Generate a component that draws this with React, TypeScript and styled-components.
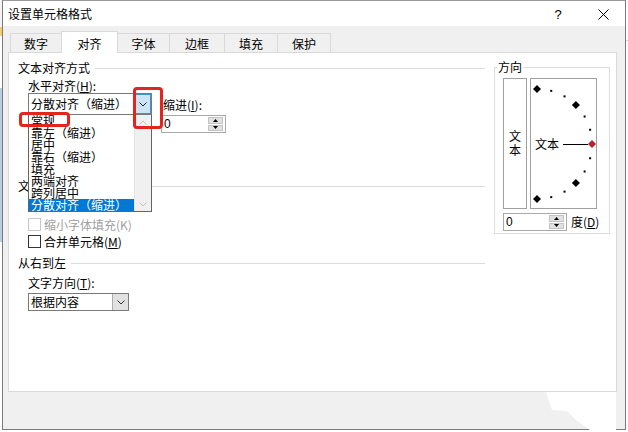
import styled, { createGlobalStyle } from 'styled-components';

const GlobalStyle = createGlobalStyle`
  html, body {
    margin: 0;
    padding: 0;
    background: #ffffff;
  }
  body {
    font-family: "Noto Sans CJK SC", "Noto Sans", sans-serif;
    font-size: 12px;
    color: #000;
  }
`;

const tabs = [
  { label: '数字', w: 52 },
  { label: '对齐', w: 57, active: true },
  { label: '字体', w: 53 },
  { label: '边框', w: 56 },
  { label: '填充', w: 54 },
  { label: '保护', w: 54 },
];

const alignOptions = ['常规', '靠左（缩进）', '居中', '靠右（缩进）', '填充', '两端对齐', '跨列居中', '分散对齐（缩进）'];

function Chevron({ color = '#333', up = false }: { color?: string; up?: boolean }) {
  return (
    <svg width="8" height="5" viewBox="0 0 8 5">
      <polyline
        points={up ? '0.5,4.5 4,1 7.5,4.5' : '0.5,0.5 4,4 7.5,0.5'}
        fill="none"
        stroke={color}
        strokeWidth="1"
      />
    </svg>
  );
}

function Spin({ width }: { width: number }) {
  return (
    <SpinBox style={{ width }}>
      <SpinValue>0</SpinValue>
      <SpinButtons>
        <SpinHalf>
          <svg width="5" height="3" viewBox="0 0 5 3">
            <polygon points="0,3 2.5,0 5,3" fill="#000" />
          </svg>
        </SpinHalf>
        <SpinHalf>
          <svg width="5" height="3" viewBox="0 0 5 3">
            <polygon points="0,0 2.5,3 5,0" fill="#000" />
          </svg>
        </SpinHalf>
      </SpinButtons>
    </SpinBox>
  );
}

function Dial() {
  const cx = 6;
  const cy = 65;
  const r = 55;
  const marks = [];
  for (let k = 0; k <= 12; k++) {
    const a = ((90 - 15 * k) * Math.PI) / 180;
    const x = cx + r * Math.cos(a);
    const y = cy - r * Math.sin(a);
    if (k === 6) continue;
    if (k % 3 === 0) {
      marks.push(<polygon key={k} points={`${x},${y - 4} ${x + 4},${y} ${x},${y + 4} ${x - 4},${y}`} fill="#000" />);
    } else {
      marks.push(<rect key={k} x={x - 1} y={y - 1} width="2" height="2" fill="#000" />);
    }
  }
  return (
    <svg width="65" height="129" viewBox="0 0 65 129">
      {marks}
      <text x="4" y="70" fontSize="12" fontFamily='"Noto Sans CJK SC", sans-serif' fill="#000">
        文本
      </text>
      <line x1="32" y1="65.5" x2="57" y2="65.5" stroke="#000" strokeWidth="1" />
      <polygon points="61,61 65,65 61,69 57,65" fill="#b8202a" />
    </svg>
  );
}

export default function App() {
  return (
    <>
      <GlobalStyle />
      <Page>
        <Edge $bg="linear-gradient(to bottom, #f4f4f4 0 27px, #f2cf74 27px 36px, #ffffff 36px 88px, #b9cde4 88px 242px, #ffffff 242px)" />
        <Dialog>
          <TitleBar>
            <Title>设置单元格格式</Title>
            <HelpButton>?</HelpButton>
            <CloseButton>
              <svg width="11" height="11" viewBox="0 0 11 11">
                <line x1="0.5" y1="0.5" x2="10.5" y2="10.5" stroke="#000" strokeWidth="1" />
                <line x1="10.5" y1="0.5" x2="0.5" y2="10.5" stroke="#000" strokeWidth="1" />
              </svg>
            </CloseButton>
          </TitleBar>

          <Body>
            <TabRow>
              {tabs.map((t) => (
                <Tab key={t.label} $w={t.w} $active={!!t.active}>
                  {t.label}
                </Tab>
              ))}
            </TabRow>

            <Panel>
              <LeftCol>
                <GroupHeader>文本对齐方式</GroupHeader>
                <AlignRow>
                  <ComboCol>
                    <FieldLabel>
                      水平对齐(<u>H</u>):
                    </FieldLabel>
                    <Combo $w={124} $h={22} $mt={-1}>
                      <ComboText>分散对齐（缩进）</ComboText>
                      <ComboButton $open>
                        <Chevron color="#222" />
                      </ComboButton>
                    </Combo>
                    <DropList>
                      <ListItems>
                        {alignOptions.map((o, i) => (
                          <ListItem key={o} $sel={i === alignOptions.length - 1}>
                            {o}
                          </ListItem>
                        ))}
                      </ListItems>
                      <ScrollBar>
                        <Chevron color="#c2c2c2" up />
                        <Chevron color="#c2c2c2" />
                      </ScrollBar>
                    </DropList>
                  </ComboCol>
                  <IndentCol>
                    <FieldLabel $pl={2}>
                      缩进(<u>I</u>):
                    </FieldLabel>
                    <SpinWrap $mt={2}>
                      <Spin width={65} />
                    </SpinWrap>
                  </IndentCol>
                </AlignRow>

                <GroupHeader $mt={45}>文本控制</GroupHeader>
                <CheckList>
                  <CheckRow $disabled>
                    <CheckBox $disabled />
                    缩小字体填充(K)
                  </CheckRow>
                  <CheckRow>
                    <CheckBox />
                    合并单元格(<u>M</u>)
                  </CheckRow>
                </CheckList>

                <GroupHeader $mt={5}>从右到左</GroupHeader>
                <Indent>
                  <FieldLabel $mt={4}>
                    文字方向(<u>T</u>):
                  </FieldLabel>
                  <Combo $w={101} $h={18} $mt={2}>
                    <ComboText>根据内容</ComboText>
                    <ComboButton>
                      <Chevron color="#333" />
                    </ComboButton>
                  </Combo>
                </Indent>
              </LeftCol>

              <DirectionGroup>
                <Legend>方向</Legend>
                <DialRow>
                  <VerticalBox>
                    <span>文</span>
                    <span>本</span>
                  </VerticalBox>
                  <DialBox>
                    <Dial />
                  </DialBox>
                </DialRow>
                <DegreeRow>
                  <Spin width={64} />
                  <DegreeLabel>
                    度(<u>D</u>)
                  </DegreeLabel>
                </DegreeRow>
              </DirectionGroup>

              <Mark style={{ left: 124, top: 34, width: 30, height: 42 }} />
              <Mark style={{ left: 10, top: 59, width: 51, height: 15 }} />
            </Panel>
          </Body>
          <Smudge />
        </Dialog>
        <Edge $bg="linear-gradient(to bottom, #ffffff 0 40px, #d4d4d4 40px 41px, #ffffff 41px)" />
      </Page>
    </>
  );
}

const Page = styled.div`
  display: flex;
  width: 628px;
  height: 432px;
  overflow: hidden;
  background: #ffffff;
`;

const Edge = styled.div<{ $bg: string }>`
  width: 2px;
  height: 432px;
  flex-shrink: 0;
  background: ${(p) => p.$bg};
`;

const Dialog = styled.div`
  position: relative;
  width: 624px;
  height: 430px;
  flex-shrink: 0;
  box-sizing: border-box;
  border: 1px solid #7a7a7a;
  border-top-color: #9a9a9a;
  background: #f0f0f0;
  display: flex;
  flex-direction: column;
`;

const TitleBar = styled.div`
  height: 25px;
  background: #ffffff;
  display: flex;
  align-items: center;
  padding-left: 5px;
`;

const Title = styled.div`
  flex: 1;
  font-size: 12px;
  line-height: 16px;
  padding-top: 1px;
`;

const HelpButton = styled.div`
  width: 30px;
  margin-right: 8px;
  text-align: center;
  font-family: "Liberation Sans", sans-serif;
  font-size: 13px;
  line-height: 16px;
  padding-top: 2px;
`;

const CloseButton = styled.div`
  width: 44px;
  display: flex;
  justify-content: center;
  align-items: center;
  padding-top: 2px;
`;

const Body = styled.div`
  flex: 1;
  display: flex;
  flex-direction: column;
  padding: 5px 8px 37px 5px;
`;

const TabRow = styled.div`
  display: flex;
  align-items: flex-end;
  height: 21px;
  padding-left: 2px;
  position: relative;
  z-index: 1;
`;

const Tab = styled.div<{ $w: number; $active: boolean }>`
  width: ${(p) => p.$w}px;
  height: ${(p) => (p.$active ? 22 : 19)}px;
  margin-bottom: ${(p) => (p.$active ? -1 : 0)}px;
  box-sizing: border-box;
  border: 1px solid #d9d9d9;
  border-bottom: none;
  background: ${(p) => (p.$active ? '#ffffff' : '#f0f0f0')};
  display: flex;
  justify-content: center;
  padding-top: ${(p) => (p.$active ? 4 : 2)}px;
  font-size: 12px;
  line-height: 16px;
  position: relative;
  z-index: ${(p) => (p.$active ? 1 : 0)};

  & + & {
    margin-left: -1px;
  }
`;

const Panel = styled.div`
  position: relative;
  height: 340px;
  box-sizing: border-box;
  background: #ffffff;
  border: 1px solid #d9d9d9;
  display: flex;
  gap: 9px;
  padding: 7px 0 0 9px;
`;

const LeftCol = styled.div`
  width: 467px;
  display: flex;
  flex-direction: column;
`;

const GroupHeader = styled.div<{ $mt?: number }>`
  display: flex;
  align-items: center;
  gap: 5px;
  height: 16px;
  line-height: 16px;
  margin-top: ${(p) => p.$mt ?? 0}px;
  white-space: nowrap;

  &::after {
    content: '';
    flex: 1;
    height: 1px;
    background: #dcdcdc;
  }
`;

const AlignRow = styled.div`
  display: flex;
  align-items: flex-start;
  padding-left: 10px;
  margin-top: 2px;
`;

const ComboCol = styled.div`
  position: relative;
  width: 124px;
  display: flex;
  flex-direction: column;
`;

const FieldLabel = styled.div<{ $pl?: number; $mt?: number }>`
  height: 16px;
  line-height: 16px;
  white-space: nowrap;
  padding-left: ${(p) => p.$pl ?? 0}px;
  margin-top: ${(p) => p.$mt ?? 0}px;
`;

const Combo = styled.div<{ $w: number; $h: number; $mt: number }>`
  width: ${(p) => p.$w}px;
  height: ${(p) => p.$h}px;
  margin-top: ${(p) => p.$mt}px;
  box-sizing: border-box;
  border: 1px solid #7a7a7a;
  background: #ffffff;
  display: flex;
`;

const ComboText = styled.div`
  flex: 1;
  display: flex;
  align-items: center;
  padding-left: 2px;
  font-size: 12px;
  line-height: 14px;
  white-space: nowrap;
  overflow: hidden;
`;

const ComboButton = styled.div<{ $open?: boolean }>`
  width: 16px;
  box-sizing: border-box;
  display: flex;
  align-items: center;
  justify-content: center;
  background: ${(p) => (p.$open ? '#cce4f7' : '#e1e1e1')};
  border: ${(p) => (p.$open ? '1px solid #3d8fd8' : 'none')};
  border-left: 1px solid ${(p) => (p.$open ? '#3d8fd8' : '#adadad')};
`;

const DropList = styled.div`
  position: absolute;
  top: 100%;
  left: 0;
  width: 124px;
  height: 97px;
  box-sizing: border-box;
  border: 1px solid #646464;
  border-top: none;
  background: #ffffff;
  display: flex;
  z-index: 3;
`;

const ListItems = styled.div`
  flex: 1;
  display: flex;
  flex-direction: column;
`;

const ListItem = styled.div<{ $sel?: boolean }>`
  height: 12px;
  line-height: 12px;
  font-size: 12px;
  padding-left: 2px;
  white-space: nowrap;
  background: ${(p) => (p.$sel ? '#0078d7' : 'transparent')};
  color: ${(p) => (p.$sel ? '#ffffff' : '#000')};
`;

const ScrollBar = styled.div`
  width: 16px;
  background: #f0f0f0;
  border-left: 1px solid #e4e4e4;
  display: flex;
  flex-direction: column;
  justify-content: space-between;
  align-items: center;
  padding: 5px 0 4px;
`;

const IndentCol = styled.div`
  display: flex;
  flex-direction: column;
  margin-left: 9px;
  margin-top: 19px;
`;

const SpinWrap = styled.div<{ $mt: number }>`
  margin-top: ${(p) => p.$mt}px;
`;

const SpinBox = styled.div`
  height: 18px;
  box-sizing: border-box;
  border: 1px solid #a9a9a9;
  background: #ffffff;
  display: flex;
  align-items: stretch;
  padding: 1px 2px 1px 0;
`;

const SpinValue = styled.div`
  flex: 1;
  padding-left: 2px;
  font-family: "Liberation Sans", sans-serif;
  font-size: 12px;
  line-height: 14px;
`;

const SpinButtons = styled.div`
  width: 15px;
  display: flex;
  flex-direction: column;
  gap: 1px;
`;

const SpinHalf = styled.div`
  flex: 1;
  background: #e1e1e1;
  border: 1px solid #c4c4c4;
  box-sizing: border-box;
  display: flex;
  align-items: center;
  justify-content: center;
`;

const CheckList = styled.div`
  display: flex;
  flex-direction: column;
  margin-top: 22px;
`;

const CheckRow = styled.div<{ $disabled?: boolean }>`
  height: 17px;
  display: flex;
  align-items: center;
  padding-left: 10px;
  line-height: 16px;
  white-space: nowrap;
  color: ${(p) => (p.$disabled ? '#a0a0a0' : '#000')};
`;

const CheckBox = styled.div<{ $disabled?: boolean }>`
  width: 13px;
  height: 13px;
  box-sizing: border-box;
  border: 1px solid ${(p) => (p.$disabled ? '#c8c8c8' : '#333333')};
  background: #ffffff;
  margin-right: 3px;
`;

const Indent = styled.div`
  display: flex;
  flex-direction: column;
  padding-left: 10px;
`;

const DirectionGroup = styled.div`
  position: relative;
  width: 116px;
  height: 167px;
  margin-top: 7px;
  box-sizing: border-box;
  border: 1px solid #dcdcdc;
  padding: 10px 0 0 8px;
`;

const Legend = styled.div`
  position: absolute;
  top: -9px;
  left: 2px;
  padding: 0 1px;
  background: #ffffff;
  line-height: 16px;
`;

const DialRow = styled.div`
  display: flex;
  gap: 3px;
  height: 131px;
`;

const VerticalBox = styled.div`
  width: 24px;
  box-sizing: border-box;
  border: 1px solid #a0a0a0;
  display: flex;
  flex-direction: column;
  align-items: center;
  justify-content: center;
  font-size: 12px;
  line-height: 14px;
  padding-bottom: 2px;
`;

const DialBox = styled.div`
  width: 67px;
  box-sizing: border-box;
  border: 1px solid #a0a0a0;
  display: flex;
`;

const DegreeRow = styled.div`
  display: flex;
  align-items: center;
  margin-top: 4px;
`;

const DegreeLabel = styled.div`
  margin-left: 4px;
  line-height: 16px;
  white-space: nowrap;
`;

const Mark = styled.div`
  position: absolute;
  box-sizing: border-box;
  border: 3px solid #e2261f;
  border-radius: 4px;
  z-index: 5;
`;

const Smudge = styled.div`
  position: absolute;
  left: 543px;
  top: 391px;
  width: 70px;
  height: 38px;
  background: #ffffff;
  clip-path: polygon(0 0, 6px 18px, 21px 19px, 30px 28px, 44px 38px, 70px 38px, 70px 0);
`;
